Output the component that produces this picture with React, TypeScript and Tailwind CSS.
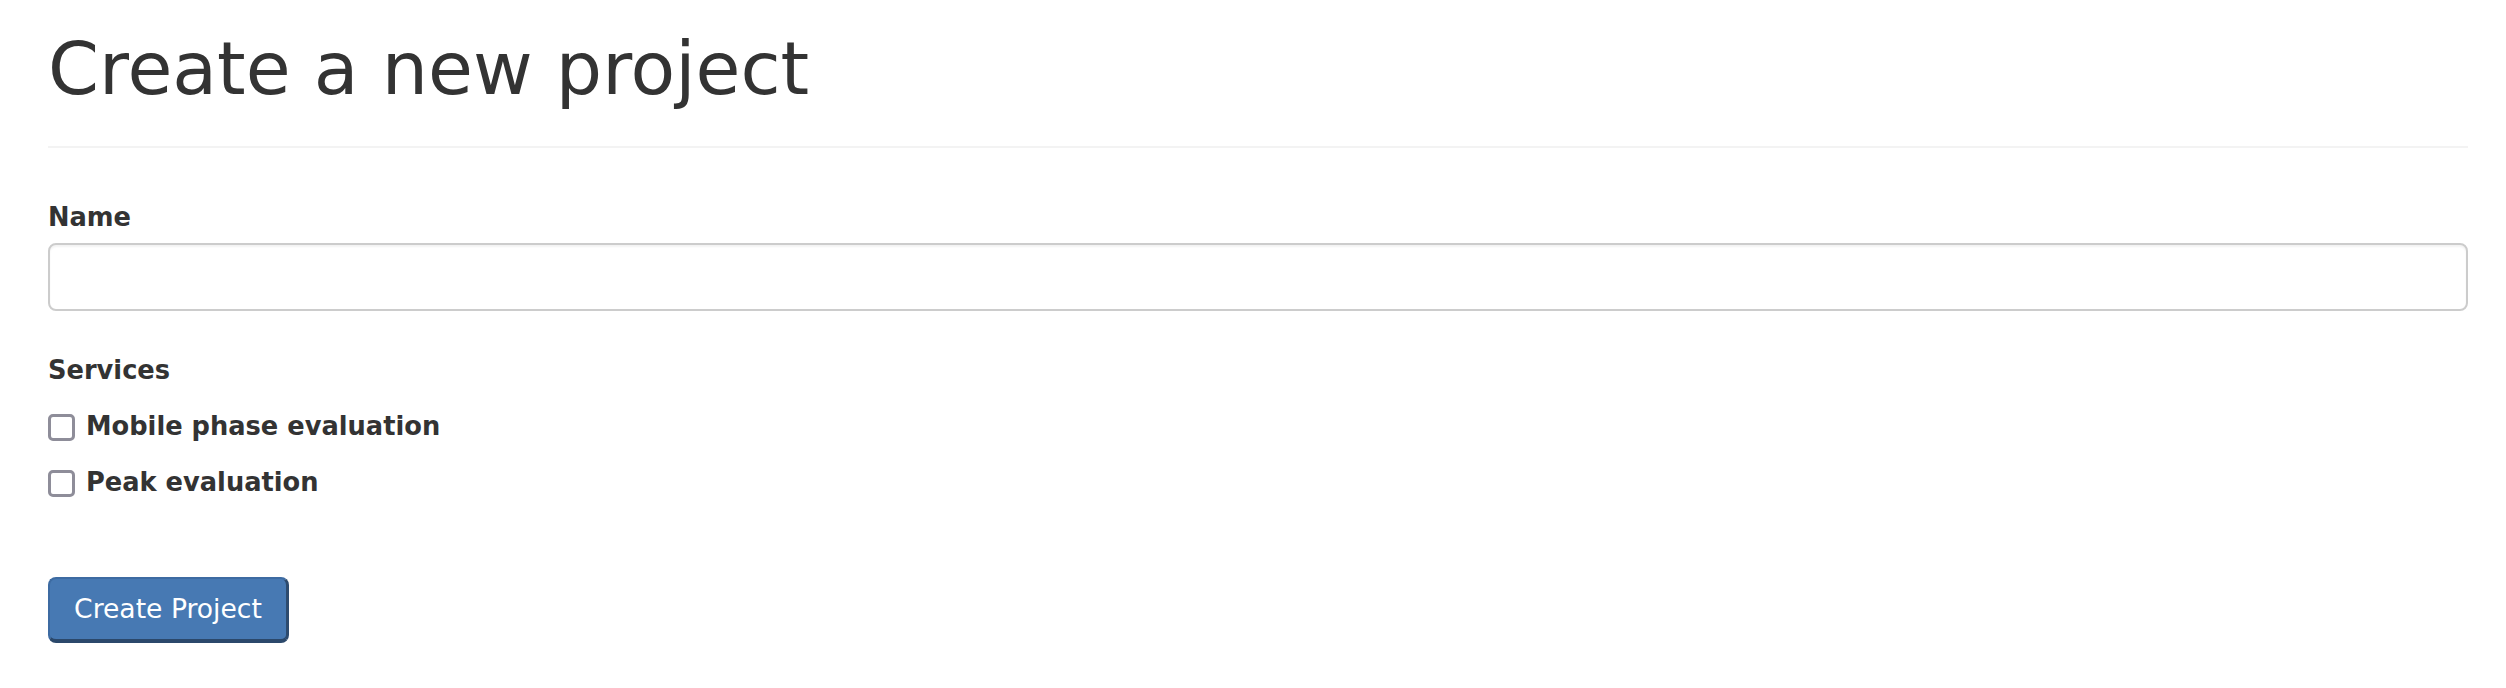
import { useState } from "react";

const services = ["Mobile phase evaluation", "Peak evaluation"];

export default function App() {
  const [name, setName] = useState("");
  const [checked, setChecked] = useState<Record<string, boolean>>({});

  return (
    <div className="min-h-screen bg-white pl-[48px] pr-[38px] text-[#333333] font-['DejaVu_Sans',sans-serif]">
      <div className="border-b-2 border-[#f3f3f3] pt-[29px] pb-[37px]">
        <h1 className="text-[73px] leading-[1.1] font-normal">Create a new project</h1>
      </div>

      <form className="pt-[52px]" onSubmit={(e) => e.preventDefault()}>
        <label htmlFor="name" className="block text-[25.7px] leading-[1.4] font-bold">
          Name
        </label>
        <input
          id="name"
          type="text"
          value={name}
          onChange={(e) => setName(e.target.value)}
          className="mt-[7px] block h-[68px] w-full rounded-[8px] border-2 border-[#cccccc] bg-white px-[24px] text-[26px] shadow-[inset_0_2px_2px_rgba(0,0,0,0.05)] outline-none"
        />

        <div className="mt-[42px] text-[25.7px] leading-[1.4] font-bold">Services</div>
        <div className="mt-[20px] flex flex-col gap-[20px]">
          {services.map((s) => (
            <label key={s} className="flex items-center gap-[11px] text-[25.7px] leading-[1.4] font-bold cursor-pointer">
              <input
                type="checkbox"
                checked={!!checked[s]}
                onChange={(e) => setChecked({ ...checked, [s]: e.target.checked })}
                className="h-[27px] w-[27px] shrink-0 appearance-none rounded-[5px] border-[3px] border-[#8e8d99] bg-white checked:bg-[#4779b3]"
              />
              <span>{s}</span>
            </label>
          ))}
        </div>

        <button
          type="submit"
          className="mt-[76px] flex h-[66px] w-[241px] items-center justify-center rounded-[8px] border-2 border-[#3d6ba2] border-r-[3px] border-b-[4px] border-r-[#2d4b6f] border-b-[#2b486b] bg-[#4779b3] text-[26.6px] text-white"
        >
          Create Project
        </button>
      </form>
    </div>
  );
}
